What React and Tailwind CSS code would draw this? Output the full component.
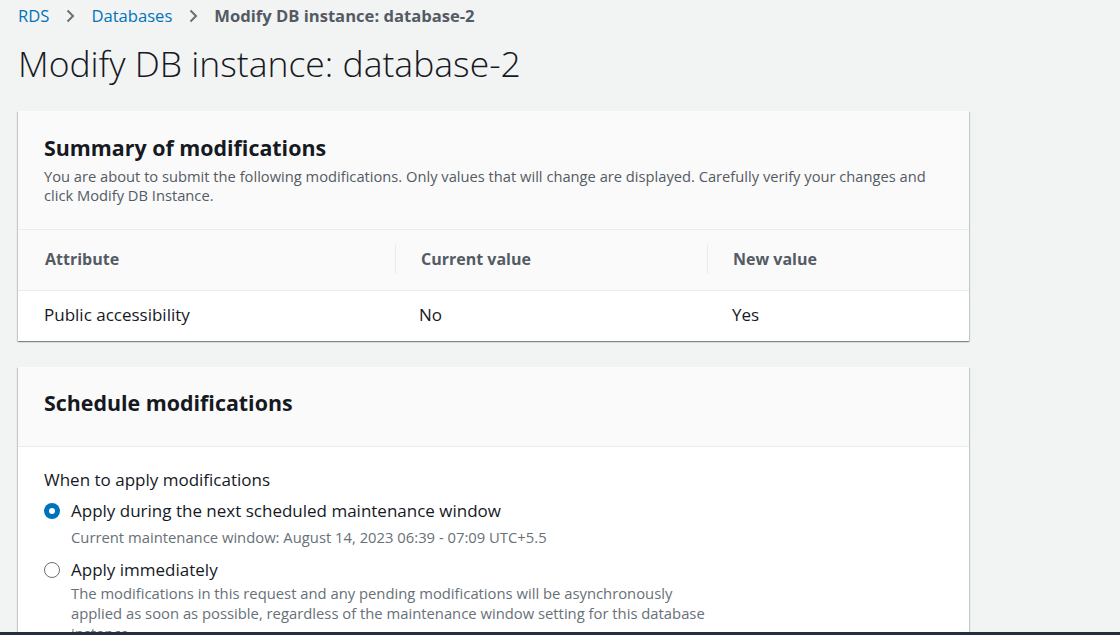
import React from "react";

const Chevron = () => (
  <svg width="16" height="16" viewBox="0 0 16 16" className="mx-[13px] shrink-0">
    <path d="M5.5 2.5 L11 8 L5.5 13.5" fill="none" stroke="#687078" strokeWidth="2" />
  </svg>
);

const Radio = ({ checked }) =>
  checked ? (
    <span className="w-4 h-4 rounded-full bg-[#0073bb] flex items-center justify-center shrink-0">
      <span className="w-[6px] h-[6px] rounded-full bg-white" />
    </span>
  ) : (
    <span className="w-4 h-4 rounded-full border-[1.5px] border-[#687078] bg-white shrink-0" />
  );

const cardShadow =
  "shadow-[0_1px_1px_0_rgba(0,28,36,0.3),1px_1px_1px_0_rgba(0,28,36,0.15),-1px_1px_1px_0_rgba(0,28,36,0.15)]";

export default function App() {
  return (
    <div className="h-screen w-full flex flex-col overflow-hidden bg-[#f2f3f3] text-[#16191f] font-['Open_Sans',sans-serif]">
      <div className="flex-1 overflow-hidden pl-[18px]">
        {/* breadcrumbs */}
        <nav className="flex items-center pt-[5px] text-[16.6px] leading-[22px]">
          <span className="text-[#0073bb]">RDS</span>
          <Chevron />
          <span className="text-[#0073bb]">Databases</span>
          <Chevron />
          <span className="font-bold text-[#545b64]">Modify DB instance: database-2</span>
        </nav>

        <h1 className="mt-[16px] text-[35.5px] leading-[40px] font-light">Modify DB instance: database-2</h1>

        {/* summary card */}
        <section className={`mt-[28px] w-[951px] bg-white ${cardShadow}`}>
          <div className="bg-[#fafafa] px-[26px] pt-[25px] pb-[24px] border-b border-[#eaeded]">
            <h2 className="text-[21.4px] leading-[24px] font-bold">Summary of modifications</h2>
            <p className="mt-[7px] text-[14.7px] leading-[19px] text-[#545b64]">
              You are about to submit the following modifications. Only values that will change are displayed. Carefully verify your changes and click Modify DB Instance.
            </p>
          </div>
          <div className="grid grid-cols-[377px_312px_1fr] bg-[#fafafa] h-[61px] pb-[2px] items-center border-b border-[#eaeded] text-[16px] font-bold text-[#545b64]">
            <div className="pl-[27px]">Attribute</div>
            <div className="pl-[25px] border-l border-[#eaeded] h-[30px] flex items-center">Current value</div>
            <div className="pl-[25px] border-l border-[#eaeded] h-[30px] flex items-center">New value</div>
          </div>
          <div className="grid grid-cols-[377px_312px_1fr] h-[50px] pb-[2px] items-center text-[17px]">
            <div className="pl-[26px]">Public accessibility</div>
            <div className="pl-[24px]">No</div>
            <div className="pl-[25px]">Yes</div>
          </div>
        </section>

        {/* schedule card */}
        <section className={`mt-[26px] w-[951px] bg-white ${cardShadow}`}>
          <div className="bg-[#fafafa] h-[80px] px-[26px] pt-[24px] border-b border-[#eaeded]">
            <h2 className="text-[21.4px] leading-[24px] font-bold">Schedule modifications</h2>
          </div>
          <div className="px-[26px] pt-[21px] pb-6 text-[17px] leading-[24px]">
            <div>When to apply modifications</div>
            <div className="mt-[7px] flex items-start gap-[11px]">
              <div className="h-6 flex items-center"><Radio checked /></div>
              <div>
                <div>Apply during the next scheduled maintenance window</div>
                <div className="mt-[4px] text-[14.8px] leading-[20px] text-[#687078]">
                  Current maintenance window: August 14, 2023 06:39 - 07:09 UTC+5.5
                </div>
              </div>
            </div>
            <div className="mt-[11px] flex items-start gap-[11px]">
              <div className="h-6 flex items-center"><Radio /></div>
              <div>
                <div>Apply immediately</div>
                <div className="mt-[1px] w-[635px] text-[14.8px] leading-[20px] text-[#687078]">
                  The modifications in this request and any pending modifications will be asynchronously applied as soon as possible, regardless of the maintenance window setting for this database instance.
                </div>
              </div>
            </div>
          </div>
        </section>
      </div>
      <div className="h-[3px] bg-[#232f3e] shrink-0" />
    </div>
  );
}
